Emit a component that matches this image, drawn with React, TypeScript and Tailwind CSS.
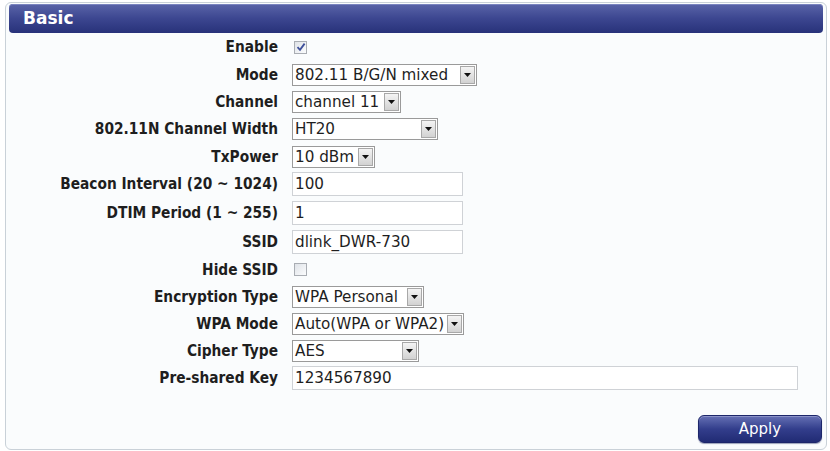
import React from "react";

type Row =
  | { label: string; h: string; kind: "check"; checked: boolean }
  | { label: string; h: string; kind: "select"; value: string; w: string }
  | { label: string; h: string; kind: "input"; value: string; w: string };

const rows: Row[] = [
  { label: "Enable", h: "h-[28px]", kind: "check", checked: true },
  { label: "Mode", h: "h-[28px]", kind: "select", value: "802.11 B/G/N mixed", w: "w-[185px]" },
  { label: "Channel", h: "h-[26px]", kind: "select", value: "channel 11", w: "w-[109px]" },
  { label: "802.11N Channel Width", h: "h-[28px]", kind: "select", value: "HT20", w: "w-[146px]" },
  { label: "TxPower", h: "h-[27px]", kind: "select", value: "10 dBm", w: "w-[83px]" },
  { label: "Beacon Interval (20 ~ 1024)", h: "h-[28px]", kind: "input", value: "100", w: "w-[171px]" },
  { label: "DTIM Period (1 ~ 255)", h: "h-[30px]", kind: "input", value: "1", w: "w-[171px]" },
  { label: "SSID", h: "h-[28px]", kind: "input", value: "dlink_DWR-730", w: "w-[171px]" },
  { label: "Hide SSID", h: "h-[27px]", kind: "check", checked: false },
  { label: "Encryption Type", h: "h-[27px]", kind: "select", value: "WPA Personal", w: "w-[132px]" },
  { label: "WPA Mode", h: "h-[27px]", kind: "select", value: "Auto(WPA or WPA2)", w: "w-[172px]" },
  { label: "Cipher Type", h: "h-[27px]", kind: "select", value: "AES", w: "w-[127px]" },
  { label: "Pre-shared Key", h: "h-[28px]", kind: "input", value: "1234567890", w: "w-[506px]" },
];

function Checkbox({ checked }: { checked: boolean }) {
  return (
    <span className="ml-[2px] flex h-[13px] w-[13px] items-center justify-center border border-[#a9adb3] bg-gradient-to-br from-[#dfe3e8] to-[#fbfcfd]">
      {checked && (
        <svg width="10" height="10" viewBox="0 0 10 10">
          <path d="M1.5 5.2 L4 7.8 L8.6 1.6" fill="none" stroke="#3d4f9a" strokeWidth="1.8" />
        </svg>
      )}
    </span>
  );
}

function Select({ value, w }: { value: string; w: string }) {
  return (
    <div className={`${w} flex h-[22px] items-center border border-[#9a9a9a] bg-white`}>
      <span className="min-w-0 flex-1 overflow-hidden whitespace-nowrap pl-[2px] leading-[20px]">{value}</span>
      <span className="mr-[1px] flex h-[18px] w-[15px] shrink-0 items-center justify-center border border-[#a8a8a8] bg-gradient-to-b from-[#f4f4f4] to-[#d2d2d2]">
        <svg width="7" height="4" viewBox="0 0 7 4">
          <path d="M0 0 H7 L3.5 4 Z" fill="#111" />
        </svg>
      </span>
    </div>
  );
}

function TextInput({ value, w }: { value: string; w: string }) {
  return (
    <div className={`${w} flex h-[24px] items-center whitespace-nowrap border border-[#cfd2d6] bg-white pl-[2px] leading-[22px]`}>
      {value}
    </div>
  );
}

export default function App() {
  return (
    <div className="h-[451px] w-[830px] bg-white pl-[5px] pt-[2px] text-[#1e1e1e]">
      <div className="flex h-[448px] w-[822px] flex-col rounded-[6px] border border-[#c9d1d8] bg-[#fafcfd]">
        <div className="mx-[3px] mt-[1px] flex h-[29px] items-center rounded-[4px] bg-gradient-to-b from-[#5a64a8] via-[#3c4690] to-[#28327a] pl-[14px] shadow-[inset_0_1px_0_#7a84c0]">
          <span className="font-['DejaVu_Sans',sans-serif] text-[17px] font-bold text-white">Basic</span>
        </div>

        <div className="flex flex-col">
          {rows.map((r) => (
            <div key={r.label} className={`${r.h} flex items-center`}>
              <div className="w-[272px] whitespace-nowrap text-right font-['DejaVu_Sans_Condensed','DejaVu_Sans',sans-serif] text-[15.3px] font-bold leading-[20px]">
                {r.label}
              </div>
              <div className="ml-[14px] flex items-center font-['DejaVu_Sans',sans-serif] text-[15.2px]">
                {r.kind === "check" && <Checkbox checked={r.checked} />}
                {r.kind === "select" && <Select value={r.value} w={r.w} />}
                {r.kind === "input" && <TextInput value={r.value} w={r.w} />}
              </div>
            </div>
          ))}
        </div>

        <div className="mr-[4px] mt-[23px] flex justify-end">
          <button
            type="button"
            className="h-[28px] w-[124px] rounded-[6px] border border-[#1d266a] bg-gradient-to-b from-[#6670b4] via-[#333e8c] to-[#212b74] font-['DejaVu_Sans',sans-serif] text-[15px] text-white shadow-[inset_0_1px_0_#8a92c8,0_1px_1px_#9aa0b8]"
          >
            Apply
          </button>
        </div>
      </div>
    </div>
  );
}
